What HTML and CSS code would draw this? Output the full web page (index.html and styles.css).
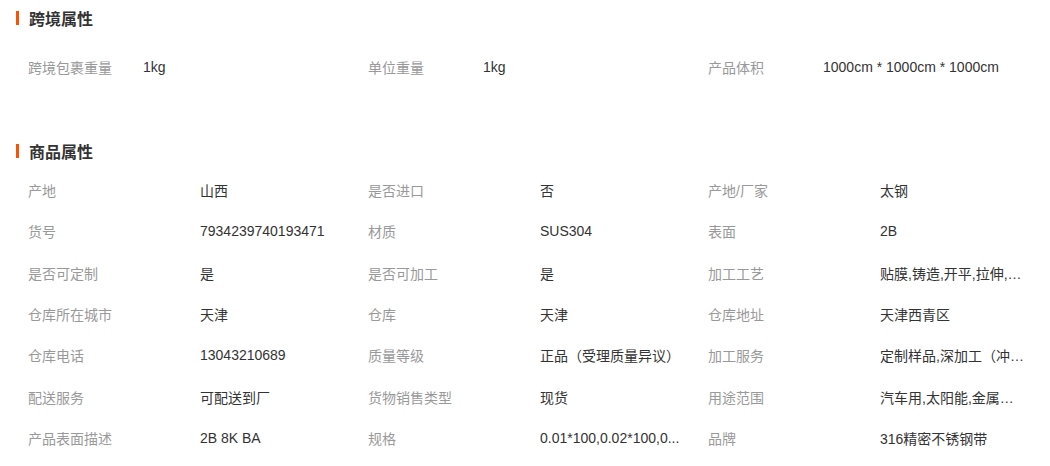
FILE: index.html
```html
<!DOCTYPE html>
<html lang="zh-CN">
<head>
    <meta charset="UTF-8">
    <meta name="viewport" content="width=device-width, initial-scale=1.0">
    <title>商品属性</title>
    <link rel="stylesheet" href="styles.css">
</head>
<body>
    <section class="attr-block cross-border">
        <h3 class="attr-title">跨境属性</h3>
        <div class="attr-grid">
            <div class="attr-item"><span class="attr-name">跨境包裹重量</span><span class="attr-value">1kg</span></div>
            <div class="attr-item"><span class="attr-name">单位重量</span><span class="attr-value">1kg</span></div>
            <div class="attr-item"><span class="attr-name">产品体积</span><span class="attr-value wide">1000cm * 1000cm * 1000cm</span></div>
        </div>
    </section>

    <section class="attr-block product">
        <h3 class="attr-title">商品属性</h3>
        <div class="attr-grid">
            <div class="attr-item"><span class="attr-name">产地</span><span class="attr-value">山西</span></div>
            <div class="attr-item"><span class="attr-name">是否进口</span><span class="attr-value">否</span></div>
            <div class="attr-item"><span class="attr-name">产地/厂家</span><span class="attr-value">太钢</span></div>

            <div class="attr-item"><span class="attr-name">货号</span><span class="attr-value">7934239740193471</span></div>
            <div class="attr-item"><span class="attr-name">材质</span><span class="attr-value">SUS304</span></div>
            <div class="attr-item"><span class="attr-name">表面</span><span class="attr-value">2B</span></div>

            <div class="attr-item"><span class="attr-name">是否可定制</span><span class="attr-value">是</span></div>
            <div class="attr-item"><span class="attr-name">是否可加工</span><span class="attr-value">是</span></div>
            <div class="attr-item"><span class="attr-name">加工工艺</span><span class="attr-value">贴膜,铸造,开平,拉伸,…</span></div>

            <div class="attr-item"><span class="attr-name">仓库所在城市</span><span class="attr-value">天津</span></div>
            <div class="attr-item"><span class="attr-name">仓库</span><span class="attr-value">天津</span></div>
            <div class="attr-item"><span class="attr-name">仓库地址</span><span class="attr-value">天津西青区</span></div>

            <div class="attr-item"><span class="attr-name">仓库电话</span><span class="attr-value">13043210689</span></div>
            <div class="attr-item"><span class="attr-name">质量等级</span><span class="attr-value">正品（受理质量异议）</span></div>
            <div class="attr-item"><span class="attr-name">加工服务</span><span class="attr-value">定制样品,深加工（冲…</span></div>

            <div class="attr-item"><span class="attr-name">配送服务</span><span class="attr-value">可配送到厂</span></div>
            <div class="attr-item"><span class="attr-name">货物销售类型</span><span class="attr-value">现货</span></div>
            <div class="attr-item"><span class="attr-name">用途范围</span><span class="attr-value">汽车用,太阳能,金属…</span></div>

            <div class="attr-item"><span class="attr-name">产品表面描述</span><span class="attr-value">2B 8K BA</span></div>
            <div class="attr-item"><span class="attr-name">规格</span><span class="attr-value">0.01*100,0.02*100,0...</span></div>
            <div class="attr-item"><span class="attr-name">品牌</span><span class="attr-value">316精密不锈钢带</span></div>
        </div>
    </section>
</body>
</html>
```

FILE: styles.css
```css
body {
    margin: 0;
    padding: 0;
    background-color: #fff;
    font-family: "Liberation Sans", "Noto Sans CJK SC", sans-serif;
    font-size: 14px;
    color: #333;
}
.attr-title {
    position: relative;
    margin: 0;
    padding-left: 29px;
    height: 20px;
    line-height: 20px;
    font-size: 16px;
    font-weight: bold;
    color: #333;
}
.attr-title::before {
    content: "";
    position: absolute;
    left: 16px;
    top: 1px;
    width: 3px;
    height: 14px;
    background-color: #ff5000;
}
.cross-border {
    padding-top: 10px;
}
.cross-border .attr-grid {
    margin-top: 16.33px;
}
.product {
    margin-top: 55.33px;
}
.product .attr-grid {
    margin-top: 6.33px;
}
.attr-grid {
    display: grid;
    grid-template-columns: repeat(3, 340px);
    grid-auto-rows: 41.33px;
    padding-left: 28px;
}
.attr-item {
    display: flex;
    align-items: center;
    white-space: nowrap;
}
.attr-name {
    flex: 0 0 172px;
    color: #999;
}
.cross-border .attr-name {
    flex-basis: 115px;
}
.attr-value {
    color: #333;
}
```
